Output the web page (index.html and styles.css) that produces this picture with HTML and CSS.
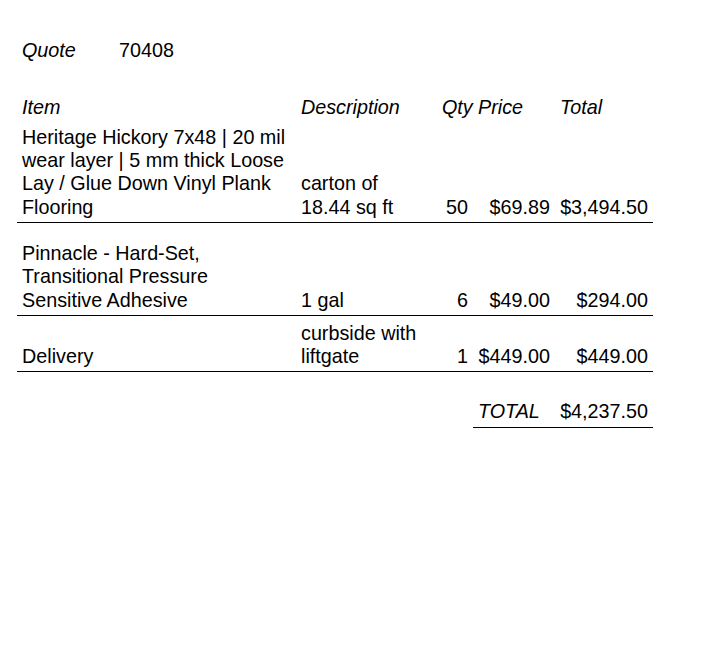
FILE: index.html
```html
<!DOCTYPE html>
<html lang="en">
<head>
<meta charset="utf-8">
<title>Quote 70408</title>
<link rel="stylesheet" href="styles.css">
</head>
<body>
<div class="sheet">
  <div class="quote">
    <span class="quote-label">Quote</span>
    <span class="quote-number">70408</span>
  </div>
  <table class="items">
    <colgroup>
      <col class="c-item">
      <col class="c-desc">
      <col class="c-qty">
      <col class="c-price">
      <col class="c-total">
    </colgroup>
    <thead>
      <tr>
        <th>Item</th>
        <th>Description</th>
        <th>Qty</th>
        <th>Price</th>
        <th>Total</th>
      </tr>
    </thead>
    <tbody>
      <tr class="line">
        <td>Heritage Hickory 7x48 | 20 mil wear layer | 5 mm thick Loose Lay / Glue Down Vinyl Plank Flooring</td>
        <td>carton of 18.44 sq ft</td>
        <td class="num">50</td>
        <td class="num">$69.89</td>
        <td class="num">$3,494.50</td>
      </tr>
      <tr class="line spaced">
        <td>Pinnacle - Hard-Set, Transitional Pressure Sensitive Adhesive</td>
        <td>1 gal</td>
        <td class="num">6</td>
        <td class="num">$49.00</td>
        <td class="num">$294.00</td>
      </tr>
      <tr class="line last">
        <td>Delivery</td>
        <td>curbside with liftgate</td>
        <td class="num">1</td>
        <td class="num">$449.00</td>
        <td class="num">$449.00</td>
      </tr>
    </tbody>
    <tfoot>
      <tr class="total-row">
        <td></td>
        <td></td>
        <td></td>
        <td class="rule total-label">TOTAL</td>
        <td class="rule num">$4,237.50</td>
      </tr>
    </tfoot>
  </table>
</div>
</body>
</html>
```

FILE: styles.css
```css
body {
  margin: 0;
  background: #fff;
  color: #000;
  font-family: "Liberation Sans", Arial, sans-serif;
  font-size: 19.75px;
  line-height: 23.33px;
}

.sheet {
  width: 636px;
  padding: 39px 0 0 17px;
}

.quote {
  display: flex;
}

.quote-label {
  width: 97px;
  box-sizing: border-box;
  padding-left: 5px;
  font-style: italic;
}

.quote-number {
  padding-left: 5px;
}

.items {
  margin-top: 30px;
  width: 636px;
  border-collapse: collapse;
  table-layout: fixed;
}

.c-item { width: 279px; }
.c-desc { width: 141px; }
.c-qty { width: 36px; }
.c-price { width: 82px; }
.c-total { width: 98px; }

.items th,
.items td {
  padding: 4px 5px 3px;
  text-align: left;
  vertical-align: bottom;
  font-weight: normal;
}

.items th {
  font-style: italic;
  padding-bottom: 2px;
}

.items td.num {
  text-align: right;
}

.line td {
  border-bottom: 1px solid #000;
}

.spaced td {
  padding-top: 19px;
}

.last td {
  padding-top: 6px;
  padding-bottom: 2px;
}

.total-row td {
  padding-top: 28px;
  padding-bottom: 4px;
}

.total-row td.rule {
  border-bottom: 1px solid #000;
}

.total-label {
  font-style: italic;
}
```
